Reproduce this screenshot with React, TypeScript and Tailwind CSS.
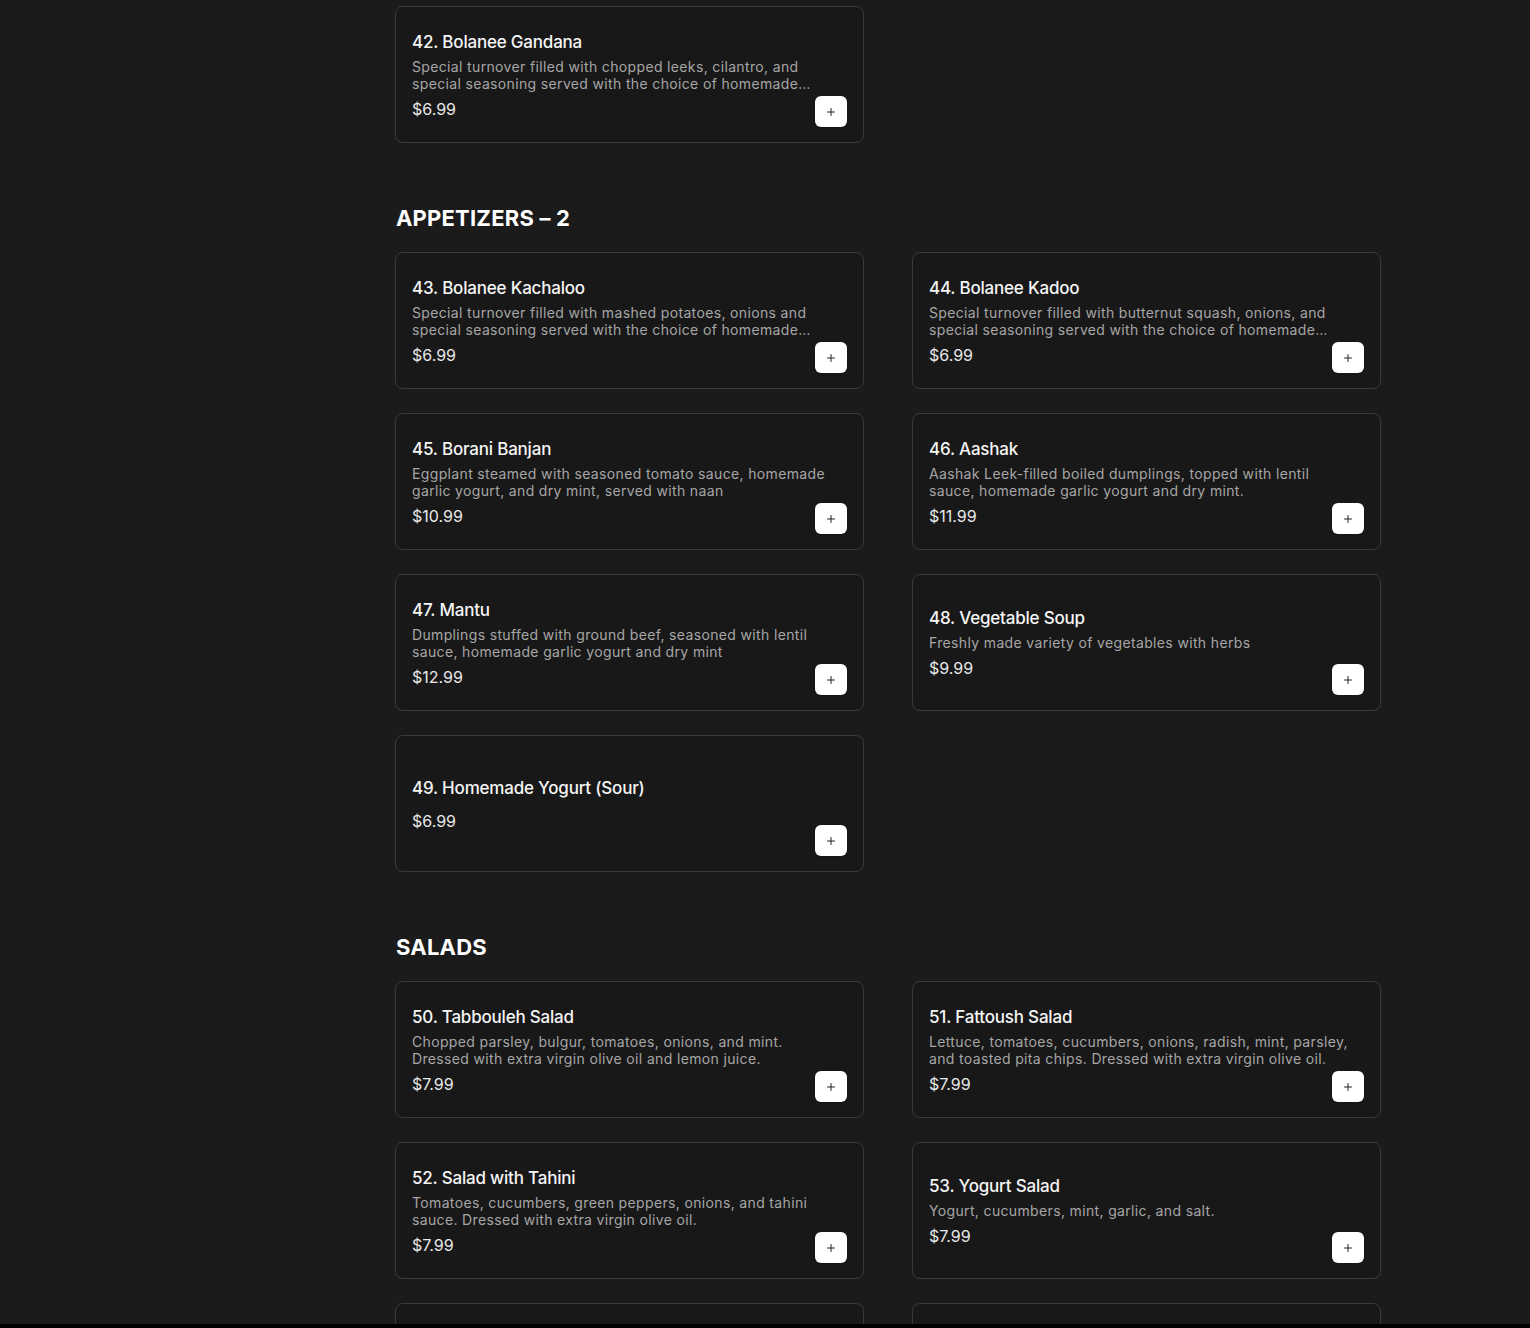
import { Plus } from "lucide-react";

type Item = { name: string; desc?: string; price: string };

const sections: { title?: string; items: Item[] }[] = [
  {
    items: [
      {
        name: "42. Bolanee Gandana",
        desc: "Special turnover filled with chopped leeks, cilantro, and special seasoning served with the choice of homemade yogurt or chutney",
        price: "$6.99",
      },
    ],
  },
  {
    title: "APPETIZERS – 2",
    items: [
      {
        name: "43. Bolanee Kachaloo",
        desc: "Special turnover filled with mashed potatoes, onions and special seasoning served with the choice of homemade yogurt or chutney",
        price: "$6.99",
      },
      {
        name: "44. Bolanee Kadoo",
        desc: "Special turnover filled with butternut squash, onions, and special seasoning served with the choice of homemade yogurt or chutney",
        price: "$6.99",
      },
      {
        name: "45. Borani Banjan",
        desc: "Eggplant steamed with seasoned tomato sauce, homemade garlic yogurt, and dry mint, served with naan",
        price: "$10.99",
      },
      {
        name: "46. Aashak",
        desc: "Aashak Leek-filled boiled dumplings, topped with lentil sauce, homemade garlic yogurt and dry mint.",
        price: "$11.99",
      },
      {
        name: "47. Mantu",
        desc: "Dumplings stuffed with ground beef, seasoned with lentil sauce, homemade garlic yogurt and dry mint",
        price: "$12.99",
      },
      {
        name: "48. Vegetable Soup",
        desc: "Freshly made variety of vegetables with herbs",
        price: "$9.99",
      },
      { name: "49. Homemade Yogurt (Sour)", price: "$6.99" },
    ],
  },
  {
    title: "SALADS",
    items: [
      {
        name: "50. Tabbouleh Salad",
        desc: "Chopped parsley, bulgur, tomatoes, onions, and mint. Dressed with extra virgin olive oil and lemon juice.",
        price: "$7.99",
      },
      {
        name: "51. Fattoush Salad",
        desc: "Lettuce, tomatoes, cucumbers, onions, radish, mint, parsley, and toasted pita chips. Dressed with extra virgin olive oil.",
        price: "$7.99",
      },
      {
        name: "52. Salad with Tahini",
        desc: "Tomatoes, cucumbers, green peppers, onions, and tahini sauce. Dressed with extra virgin olive oil.",
        price: "$7.99",
      },
      {
        name: "53. Yogurt Salad",
        desc: "Yogurt, cucumbers, mint, garlic, and salt.",
        price: "$7.99",
      },
      { name: "54. Greek Salad", desc: "", price: "$7.99" },
      { name: "55. Chicken Salad", desc: "", price: "$9.99" },
    ],
  },
];

function MenuCard({ item }: { item: Item }) {
  return (
    <div className="relative flex h-[137px] flex-col justify-center rounded-lg border border-[#3a3a3a] bg-[#181818] px-4 pt-px">
      <p className="text-[17px] leading-6 font-medium tracking-[-0.2px] text-[#f5f5f5]">
        {item.name}
      </p>
      <p className="mt-1 line-clamp-2 max-w-[428px] text-[14px] leading-[17px] tracking-[0.35px] text-[#a6a6a6]">
        {item.desc}
      </p>
      <p className="mt-[5px] text-[16px] leading-6 text-[#e8e8e8]">{item.price}</p>
      <button className="absolute right-[16px] bottom-[15px] flex h-[31px] w-8 items-center justify-center rounded-md bg-white text-[#222] shadow-sm">
        <Plus size={12} strokeWidth={2} />
      </button>
    </div>
  );
}

export default function App() {
  return (
    <div
      className="relative h-[1328px] overflow-hidden bg-[#1b1b1b]"
      style={{ fontFamily: "Inter, 'Noto Sans', sans-serif" }}
    >
      <div className="w-[1381px] pt-[6px] pl-[395px]">
        {sections.map((s, i) => (
          <section key={i} className={i > 0 ? "mt-[61px]" : ""}>
            {s.title && (
              <h2 className="mb-5 pl-px text-[22px] leading-7 font-bold tracking-[0.2px] text-white">
                {s.title}
              </h2>
            )}
            <div className="grid grid-cols-2 gap-x-12 gap-y-6">
              {s.items.map((it) => (
                <MenuCard key={it.name} item={it} />
              ))}
            </div>
          </section>
        ))}
      </div>
      <div className="absolute right-0 bottom-0 left-0 h-1 bg-black" />
    </div>
  );
}
